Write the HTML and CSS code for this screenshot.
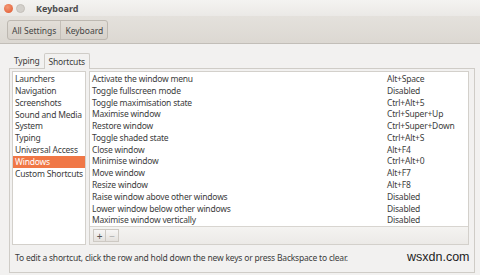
FILE: index.html
```html
<!DOCTYPE html>
<html lang="en">
<head>
    <meta charset="UTF-8">
    <title>Keyboard</title>
    <link rel="stylesheet" href="styles.css">
</head>
<body>
    <div class="window">
        <div class="titlebar">
            <span class="dot close"></span>
            <span class="dot minimise"></span>
            <span class="title">Keyboard</span>
        </div>
        <div class="toolbar">
            <div class="crumbs">
                <button class="crumb">All Settings</button>
                <button class="crumb">Keyboard</button>
            </div>
        </div>
        <div class="content">
            <div class="tabs">
                <span class="tab">Typing</span>
                <span class="tab active">Shortcuts</span>
            </div>
            <div class="panel">
                <div class="lists">
                    <ul class="categories">
                        <li>Launchers</li>
                        <li>Navigation</li>
                        <li>Screenshots</li>
                        <li>Sound and Media</li>
                        <li>System</li>
                        <li>Typing</li>
                        <li>Universal Access</li>
                        <li class="selected">Windows</li>
                        <li>Custom Shortcuts</li>
                    </ul>
                    <div class="shortcuts-box">
                        <table class="shortcuts">
                            <tr><td>Activate the window menu</td><td>Alt+Space</td></tr>
                            <tr><td>Toggle fullscreen mode</td><td>Disabled</td></tr>
                            <tr><td>Toggle maximisation state</td><td>Ctrl+Alt+5</td></tr>
                            <tr><td>Maximise window</td><td>Ctrl+Super+Up</td></tr>
                            <tr><td>Restore window</td><td>Ctrl+Super+Down</td></tr>
                            <tr><td>Toggle shaded state</td><td>Ctrl+Alt+S</td></tr>
                            <tr><td>Close window</td><td>Alt+F4</td></tr>
                            <tr><td>Minimise window</td><td>Ctrl+Alt+0</td></tr>
                            <tr><td>Move window</td><td>Alt+F7</td></tr>
                            <tr><td>Resize window</td><td>Alt+F8</td></tr>
                            <tr><td>Raise window above other windows</td><td>Disabled</td></tr>
                            <tr><td>Lower window below other windows</td><td>Disabled</td></tr>
                            <tr><td>Maximise window vertically</td><td>Disabled</td></tr>
                        </table>
                        <div class="list-tools">
                            <span class="tool-btn">+</span><span class="tool-btn">&minus;</span>
                        </div>
                    </div>
                </div>
                <p class="hint">To edit a shortcut, click the row and hold down the new keys or press Backspace to clear.</p>
            </div>
        </div>
        <span class="watermark">wsxdn.com</span>
    </div>
</body>
</html>
```

FILE: styles.css
```css
* { box-sizing: border-box; }
body { margin: 0; background: #e6e4e0; font-family: "Noto Sans", "DejaVu Sans", sans-serif; font-size: 8.5px; letter-spacing: -0.2px; color: #3c3c3c; }
.window { position: relative; width: 480px; height: 275px; overflow: hidden; background: #f2f1f0; }

/* title bar */
.titlebar { height: 16px; display: flex; align-items: center; padding-left: 4px; background: linear-gradient(#f4f3f1, #ebe9e6); }
.dot { width: 9px; height: 9px; border-radius: 50%; margin-right: 3px; }
.close { background: radial-gradient(circle at 40% 35%, #f39a77, #e0542a); }
.minimise { background: #d3d0cb; border: 1px solid #c4c0ba; }
.title { margin-left: 8px; font-weight: bold; font-size: 9px; letter-spacing: 0; color: #4c4c4c; }

/* toolbar */
.toolbar { height: 28px; padding: 4px 7px; background: linear-gradient(#e4e1dc, #dcd8d2); border-bottom: 1px solid #c2beb8; }
.crumbs { display: inline-flex; height: 20px; border: 1px solid #bdb8b1; border-radius: 3px; background: linear-gradient(#e2ded8, #d6d1ca); }
.crumb { font: inherit; font-size: 8.5px; letter-spacing: 0; color: #444; border: none; background: none; padding: 0 4px; }
.crumb + .crumb { border-left: 1px solid #c4bfb8; }

/* content */
.content { padding: 9px 5px 0 9px; }
.tabs { display: flex; height: 15px; padding-left: 1px; }
.tab { padding: 0 4px; line-height: 16px; }
.tab.active { border: 1px solid #cfccc7; border-bottom: none; background: #f2f1f0; border-radius: 2px 2px 0 0; margin-bottom: -1px; position: relative; }
.panel { height: 205px; border: 1px solid #cfccc7; padding: 2px 5px 0 2px; }
.lists { display: flex; gap: 3px; height: 174px; }

.categories { list-style: none; margin: 0; padding: 1px 0 0; width: 74px; background: #fff; border: 1px solid #d3d0cb; }
.categories li { height: 11.85px; line-height: 11.85px; padding-left: 2px; white-space: nowrap; }
.categories li.selected { background: #f07746; color: #fff; }

.shortcuts-box { flex: 1; display: flex; flex-direction: column; border: 1px solid #d3d0cb; }
.shortcuts { border-collapse: collapse; width: 100%; background: #fff; }
.shortcuts td { height: 11.78px; line-height: 11.78px; padding: 0 0 0 2px; white-space: nowrap; }
.shortcuts td:last-child { width: 83px; }
.shortcuts tr:first-child td { padding-top: 1px; }
.list-tools { flex: 1; display: flex; align-items: center; padding-left: 3px; background: linear-gradient(#f4f3f1, #eceae7); border-top: 1px solid #d8d5d0; }
.tool-btn { width: 13px; height: 13px; line-height: 12px; text-align: center; font-size: 10px; color: #555; background: linear-gradient(#f7f6f5, #e4e1dd); border: 1px solid #cdc9c3; }
.tool-btn + .tool-btn { color: #aaa; border-left: none; }

.hint { margin: 0; padding: 7px 0 0 3px; white-space: nowrap; }

.watermark { position: absolute; left: 407px; top: 250px; font-family: "Liberation Sans", sans-serif; font-size: 12.5px; letter-spacing: 0; color: #1e1e1e; }
```
